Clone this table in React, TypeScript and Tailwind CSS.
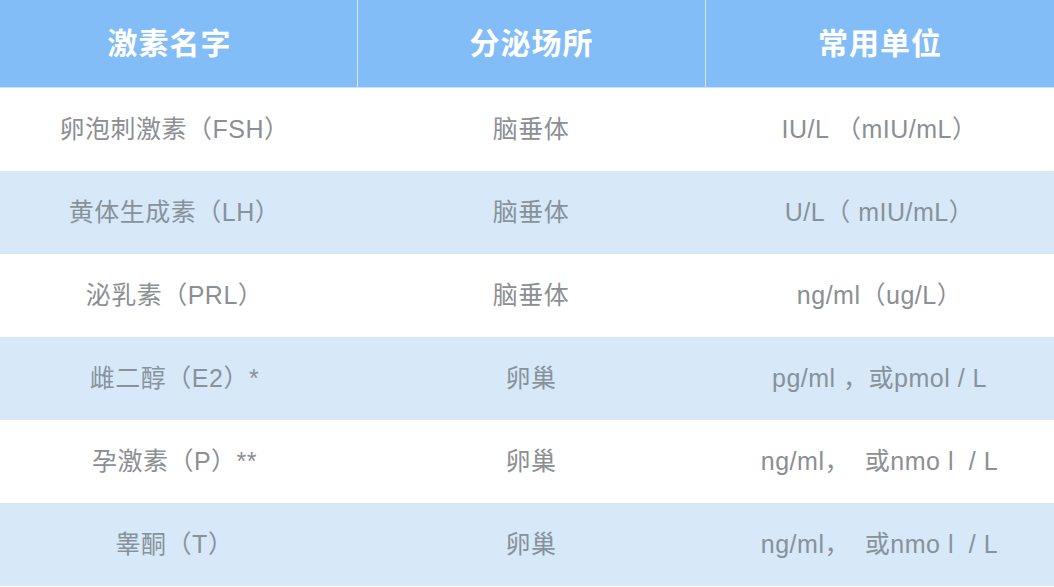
const font = "font-['Liberation_Sans','Noto_Sans_CJK_SC',sans-serif]";

const headers = ["激素名字", "分泌场所", "常用单位"];

const rows = [
  ["卵泡刺激素（FSH）", "脑垂体", "IU/L （mIU/mL）"],
  ["黄体生成素（LH）", "脑垂体", "U/L（ mIU/mL）"],
  ["泌乳素（PRL）", "脑垂体", "ng/ml（ug/L）"],
  ["雌二醇（E2）*", "卵巢", "pg/ml ，或pmol / L"],
  ["孕激素（P）**", "卵巢", "ng/ml，  或nmo l  / L"],
  ["睾酮（T）", "卵巢", "ng/ml，  或nmo l  / L"],
];

export default function App() {
  return (
    <div className={`w-[1054px] h-[587px] bg-white overflow-hidden ${font}`}>
      {/* Header */}
      <div className="grid grid-cols-[357px_348px_349px] h-[88px] bg-[#82bdf7] border-b border-[#cfe3f8]">
        {headers.map((h, i) => (
          <div
            key={h}
            className={`flex items-center justify-center text-white font-bold text-[30px] tracking-[1px] ${
              i > 0 ? "border-l border-[#d6e9fb]" : "pr-[18px]"
            }`}
          >
            {h}
          </div>
        ))}
      </div>

      {/* Body */}
      {rows.map((r, idx) => (
        <div
          key={idx}
          className={`grid grid-cols-[357px_348px_349px] h-[83px] ${
            idx % 2 === 1 ? "bg-[#d7e8f9] text-[#87929b]" : "bg-white text-[#8c8f93]"
          }`}
        >
          {r.map((c, j) => (
            <div
              key={j}
              className={`flex items-center justify-center text-[25px] tracking-[0.5px] whitespace-pre ${
                j === 0 ? "pr-[8px]" : ""
              }`}
            >
              {c}
            </div>
          ))}
        </div>
      ))}
    </div>
  );
}
